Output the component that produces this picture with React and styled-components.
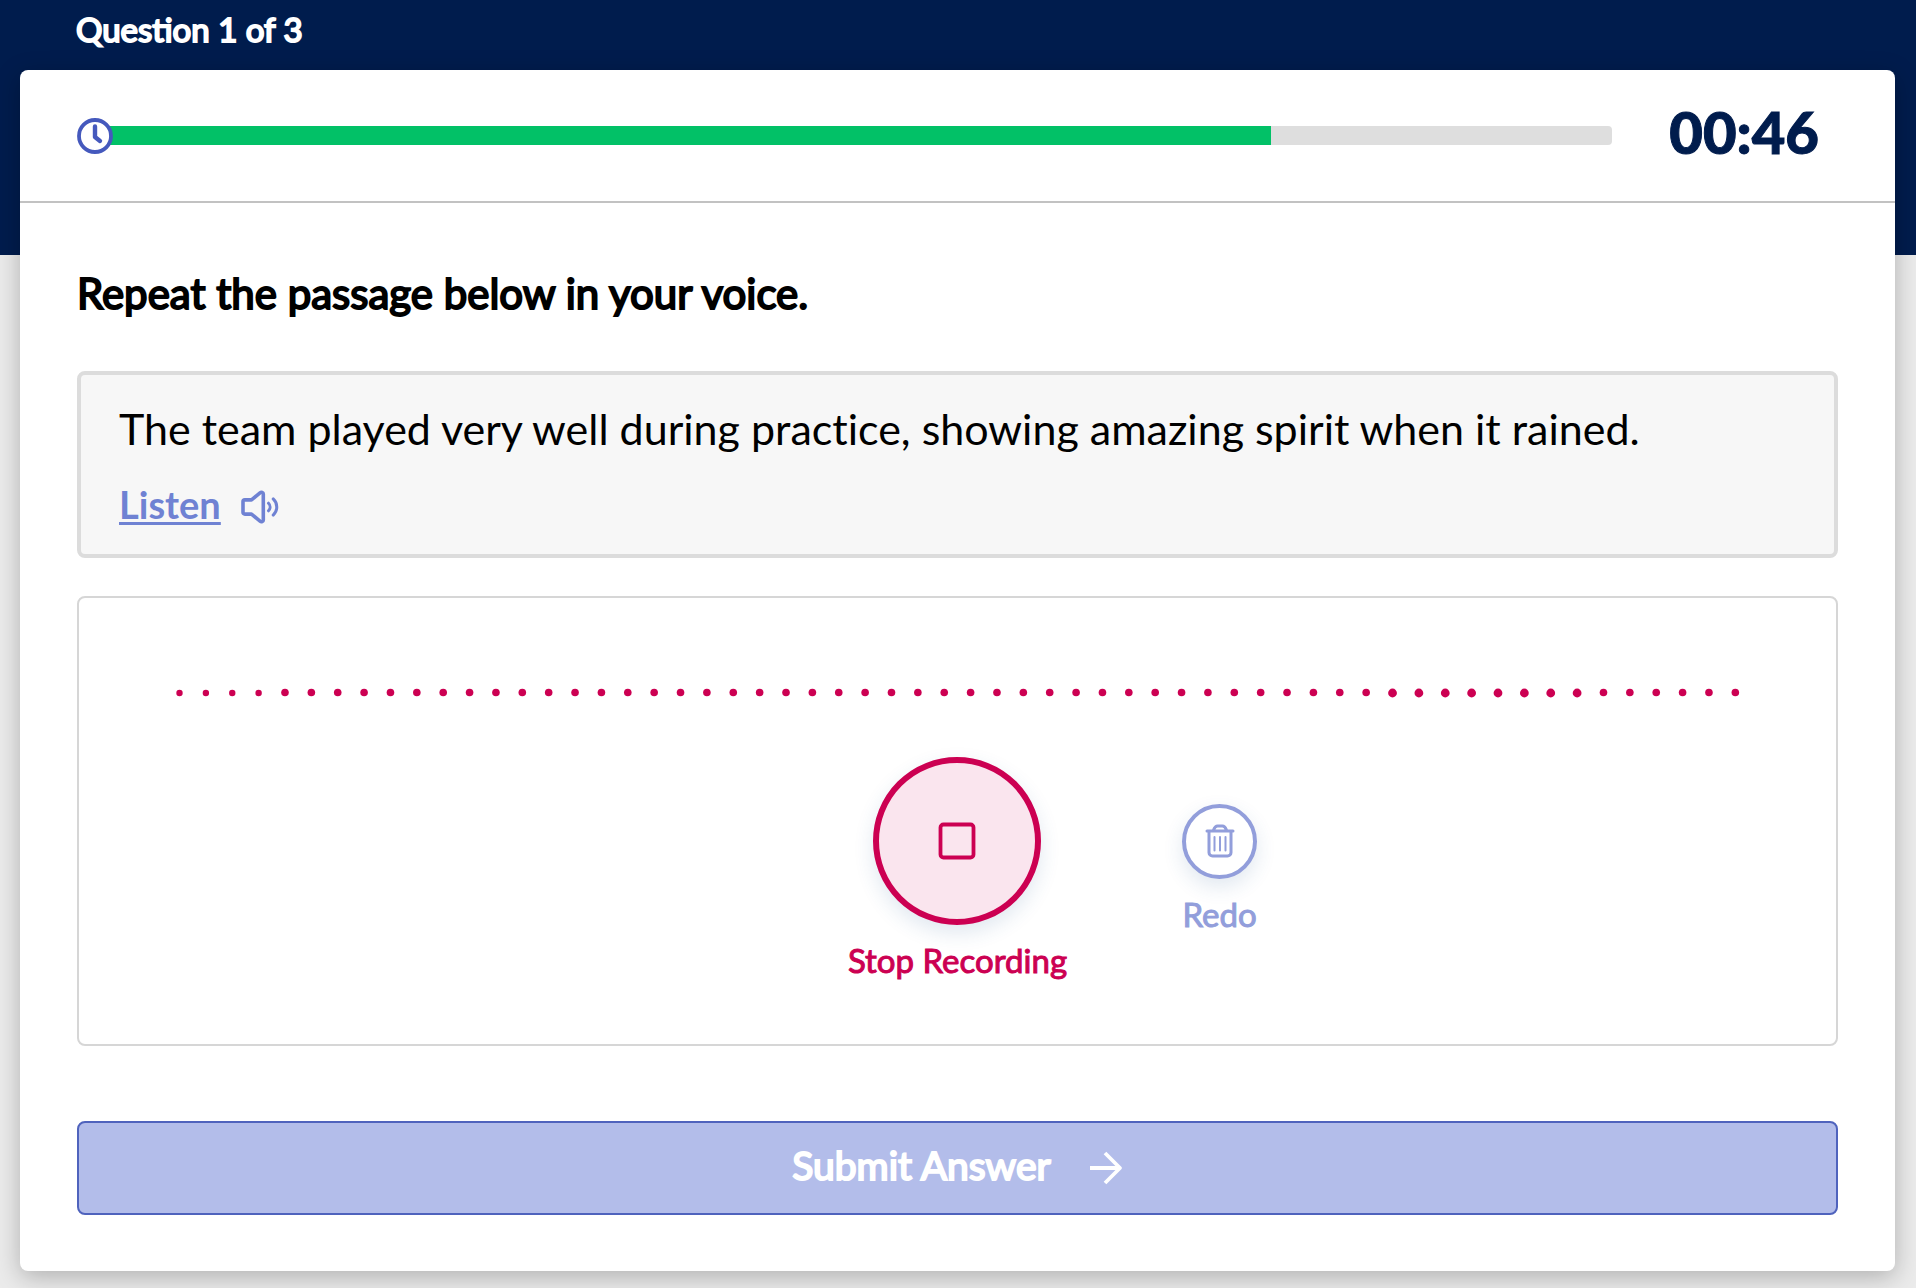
import React from 'react';
import styled, { createGlobalStyle } from 'styled-components';

const GlobalStyle = createGlobalStyle`
    * {
        box-sizing: border-box;
    }

    body {
        margin: 0;
        font-family: Lato, 'Liberation Sans', sans-serif;
        background: #ebebeb;
    }
`;

// Styled Components
const Page = styled.div`
    min-height: 100vh;
    padding: 0 21px 18px 20px;
    background: linear-gradient(#001c4d 0 255px, #ebebeb 255px);
`;

const QuestionCount = styled.p`
    margin: 0;
    padding: 9px 56px 21px;
    color: #fff;
    font-size: 33px;
    line-height: 40px;
    -webkit-text-stroke: 2px currentColor;
`;

const Card = styled.main`
    background: #fff;
    border-radius: 8px;
    box-shadow: 0 6px 24px rgba(0, 0, 0, 0.25);
`;

const TimerBar = styled.div`
    display: flex;
    align-items: center;
    height: 133px;
    padding: 0 76px 0 57px;
    border-bottom: 2px solid #c2c2c2;
`;

const ClockIcon = styled.svg`
    flex: none;
    width: 36px;
    height: 36px;
    margin-right: -4px;
    z-index: 1;
`;

const Track = styled.div`
    flex: 1;
    height: 19px;
    background: #dedede;
    border-radius: 0 4px 4px 0;
    overflow: hidden;
`;

const Fill = styled.div`
    height: 100%;
    background: #02c167;
`;

const Time = styled.time`
    margin-left: 57px;
    padding-bottom: 8px;
    color: #001c4d;
    font-size: 58px;
    font-weight: 900;
    line-height: 64px;
    -webkit-text-stroke: 1px currentColor;
`;

const Content = styled.div`
    display: flex;
    flex-direction: column;
    padding: 62px 57px 56px;
`;

const Title = styled.h1`
    margin: 0 0 49px;
    color: #000;
    font-size: 42px;
    font-weight: 400;
    line-height: 57px;
    -webkit-text-stroke: 2px currentColor;
`;

const Passage = styled.section`
    height: 187px;
    padding: 26px 38px;
    background: #f7f7f7;
    border: 4px solid #dcdcdc;
    border-radius: 8px;
`;

const PassageText = styled.p`
    margin: 0 0 20px;
    color: #000;
    font-size: 43px;
    font-variant-ligatures: none;
    line-height: 56px;
`;

const ListenButton = styled.button`
    display: flex;
    align-items: center;
    gap: 20px;
    padding: 5px 0;
    background: none;
    border: none;
    color: #6f82d3;
    font-family: inherit;
    font-size: 38px;
    font-weight: 700;
    line-height: 44px;
    cursor: pointer;

    span {
        text-decoration: underline;
        text-decoration-thickness: 3px;
        text-underline-offset: 3px;
    }

    svg {
        margin-top: 6px;
    }
`;

const Recorder = styled.section`
    height: 450px;
    margin: 38px 0 75px;
    padding: 79px 97px 0;
    border: 2px solid #d6d6d6;
    border-radius: 8px;
`;

const Wave = styled.svg`
    display: block;
    width: 100%;
    height: 32px;
    overflow: visible;
`;

const Controls = styled.div`
    display: grid;
    grid-template-columns: 1fr auto 1fr;
    align-items: center;
    gap: 115px;
    margin-top: 48px;
`;

const RecordButton = styled.button`
    display: flex;
    flex-direction: column;
    align-items: center;
    gap: 15px;
    grid-column: ${({ $large }) => ($large ? 2 : 3)};
    justify-self: start;
    padding: 0;
    background: none;
    border: none;
    color: ${({ $large }) => ($large ? '#cc0052' : '#929edb')};
    font-family: inherit;
    font-size: 33px;
    font-weight: 400;
    line-height: 40px;
    -webkit-text-stroke: 1px currentColor;
    cursor: pointer;
`;

const Circle = styled.span`
    display: flex;
    align-items: center;
    justify-content: center;
    width: ${({ $large }) => ($large ? '168px' : '75px')};
    height: ${({ $large }) => ($large ? '168px' : '75px')};
    background: ${({ $large }) => ($large ? '#fae5ee' : '#fff')};
    border: ${({ $large }) => ($large ? '6px' : '4px')} solid currentColor;
    border-radius: 50%;
    box-shadow: 0 8px 20px rgba(40, 90, 150, 0.14);
`;

const SubmitButton = styled.button`
    display: flex;
    align-items: center;
    justify-content: center;
    gap: 38px;
    height: 94px;
    padding: 0;
    background: #b3bdea;
    border: 2px solid #4f63bd;
    border-radius: 8px;
    color: #fff;
    font-family: inherit;
    font-size: 39px;
    font-weight: 400;
    cursor: pointer;

    span {
        padding-bottom: 6px;
        -webkit-text-stroke: 2px currentColor;
    }
`;

// Radii of the level dots, left to right
const LEVELS = Array.from({ length: 60 }, (_, i) => {
    if (i < 4) return 3.2;
    if (i > 45 && i < 54) return 4.4;
    return 3.8;
});

const App = () => {
    const progress = 77.3;

    return (
        <>
            <GlobalStyle />
            <Page>
                <QuestionCount>Question 1 of 3</QuestionCount>
                <Card>
                    <TimerBar>
                        <ClockIcon viewBox="0 0 36 36" fill="none" stroke="#4559bd" aria-hidden="true">
                            <circle cx="18" cy="18" r="16" fill="#fff" strokeWidth="3.8" />
                            <path d="M18 8.5v10.500l5 4" strokeWidth="4.4" strokeLinecap="round" strokeLinejoin="round" />
                        </ClockIcon>
                        <Track role="progressbar" aria-label="Time left" aria-valuenow={progress}>
                            <Fill style={{ width: `${progress}%` }} />
                        </Track>
                        <Time>00:46</Time>
                    </TimerBar>
                    <Content>
                        <Title>Repeat the passage below in your voice.</Title>
                        <Passage>
                            <PassageText>
                                The team played very well during practice, showing amazing spirit when it rained.
                            </PassageText>
                            <ListenButton type="button">
                                <span>Listen</span>
                                <svg width="38" height="34" viewBox="0 0 40 36" fill="none" stroke="currentColor" strokeWidth="3.8" strokeLinecap="round" strokeLinejoin="round" aria-hidden="true">
                                    <path d="M4 10.5h7L20 3c1.500-1.200 3.500-.5 3.500 1.300v27.400c0 1.800-2 2.500-3.500 1.300L11 25.500H4c-1.300 0-2-.8-2-2v-11c0-1.200.7-2 2-2z" />
                                    <path d="M29 14c2.200 2.200 2.200 5.800 0 8M34 9.500c5 4.600 5 12.400 0 17" strokeWidth="3.2" />
                                </svg>
                            </ListenButton>
                        </Passage>
                        <Recorder>
                            <Wave viewBox="0 0 1563 32" fill="#cc0052" aria-hidden="true">
                                {LEVELS.map((r, i) => (
                                    <circle key={i} cx={3.5 + i * 26.37} cy={r === 3.8 ? 15.5 : 16} r={r} />
                                ))}
                            </Wave>
                            <Controls>
                                <RecordButton type="button" $large>
                                    <Circle $large>
                                        <svg width="38" height="38" viewBox="0 0 38 38" fill="none" stroke="currentColor" strokeWidth="3.8" aria-hidden="true">
                                            <rect x="2.500" y="2.500" width="33" height="33" rx="3" />
                                        </svg>
                                    </Circle>
                                    Stop Recording
                                </RecordButton>
                                <RecordButton type="button">
                                    <Circle>
                                        <svg width="30" height="34" viewBox="0 0 30 34" fill="none" stroke="currentColor" strokeWidth="3" strokeLinecap="round" strokeLinejoin="round" aria-hidden="true">
                                            <path d="M2 7h26M8.500 6c1-2.500 2-4 4-4h5c2 0 3 1.500 4 4M4 7v21.500c0 2 1.500 3.500 3.500 3.500h15c2 0 3.500-1.500 3.500-3.500V7" />
                                            <path d="M9.500 13v13.500M15 13v13.500M20.500 13v13.500" strokeWidth="2" />
                                        </svg>
                                    </Circle>
                                    Redo
                                </RecordButton>
                            </Controls>
                        </Recorder>
                        <SubmitButton type="button">
                            <span>Submit Answer</span>
                            <svg width="34" height="34" viewBox="0 0 34 34" fill="none" stroke="currentColor" strokeWidth="3.8" strokeLinejoin="round" aria-hidden="true">
                                <path d="M1 17h30M16 2l15 15-15 15" />
                            </svg>
                        </SubmitButton>
                    </Content>
                </Card>
            </Page>
        </>
    );
};

export default App;
